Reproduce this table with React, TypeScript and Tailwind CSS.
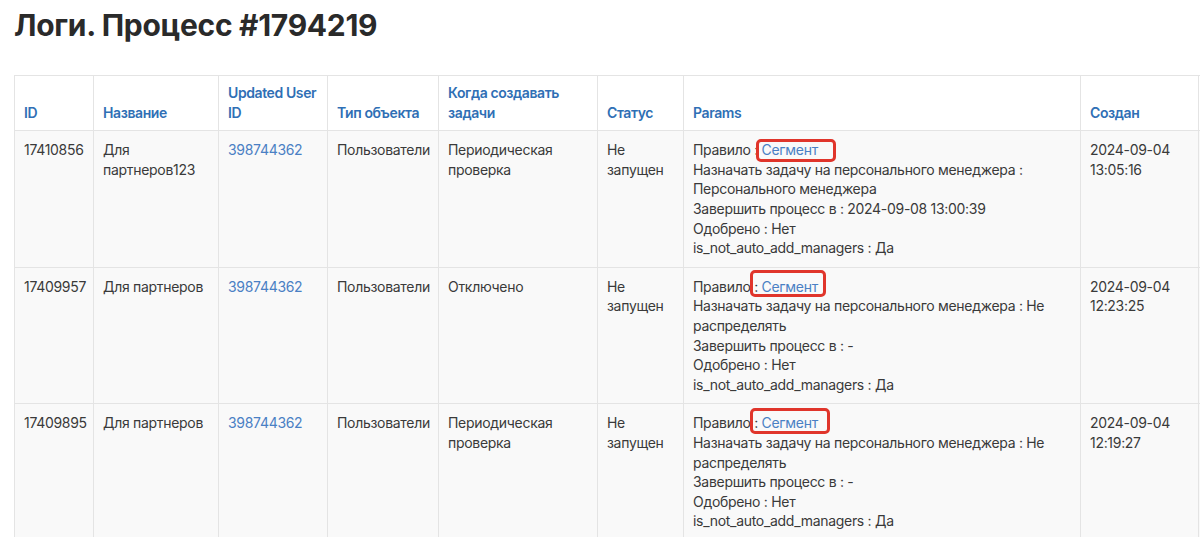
import React from "react";

type Row = {
    id: string;
    name: string;
    userId: string;
    type: string;
    when: string;
    status: string;
    manager: string;
    finish: string;
    created: string[];
    box: string;
};

const rows: Row[] = [
    {
        id: "17410856",
        name: "Для партнеров123",
        userId: "398744362",
        type: "Пользователи",
        when: "Периодическая проверка",
        status: "Не запущен",
        manager: "Персонального менеджера",
        finish: "2024-09-08 13:00:39",
        created: ["2024-09-04", "13:05:16"],
        box: "-left-[6px] -right-[18px] -top-[1px] -bottom-[2px]",
    },
    {
        id: "17409957",
        name: "Для партнеров",
        userId: "398744362",
        type: "Пользователи",
        when: "Отключено",
        status: "Не запущен",
        manager: "Не распределять",
        finish: "-",
        created: ["2024-09-04", "12:23:25"],
        box: "-left-[12px] -right-[8px] -top-[7px] -bottom-[1px]",
    },
    {
        id: "17409895",
        name: "Для партнеров",
        userId: "398744362",
        type: "Пользователи",
        when: "Периодическая проверка",
        status: "Не запущен",
        manager: "Не распределять",
        finish: "-",
        created: ["2024-09-04", "12:19:27"],
        box: "-left-[12px] -right-[12px] -top-[5px] -bottom-[1px]",
    },
];

const headers = ["ID", "Название", "Updated User ID", "Тип объекта", "Когда создавать задачи", "Статус", "Params", "Создан", ""];
const widths = ["w-[79px]", "w-[125px]", "w-[109px]", "w-[111px]", "w-[159px]", "w-[86px]", "w-[397px]", "w-[118px]", "w-[120px]"];

const cell = "border border-[#e4e4e4] px-[9px] pt-[9px] pb-[9px] align-top";

export default function App() {
    return (
        <div className="w-[1200px] h-[537px] overflow-hidden bg-white font-['Inter',sans-serif] text-[14px] leading-[19.6px] text-[#3a3a3a] tracking-[-0.3px]">
            <h1 className="pl-[14px] pt-[5px] text-[30px] leading-[40px] font-bold text-[#2a2a2a] tracking-[-0.3px]">
                Логи. Процесс #1794219
            </h1>
            <div className="pl-[14px] pt-[30px]">
                <table className="table-fixed border-collapse w-[1304px]">
                    <colgroup>
                        {widths.map((w, i) => (
                            <col key={i} className={w} />
                        ))}
                    </colgroup>
                    <thead>
                        <tr className="bg-white">
                            {headers.map((h, i) => (
                                <th
                                    key={i}
                                    className="border border-[#e4e4e4] pl-[9px] pr-[6px] pt-[7px] pb-[8px] align-bottom text-left font-semibold text-[#2f6fb5] tracking-[-0.4px]"
                                >
                                    {h}
                                </th>
                            ))}
                        </tr>
                    </thead>
                    <tbody>
                        {rows.map((r) => (
                            <tr key={r.id} className="bg-[#f9f9f9] h-[135px]">
                                <td className={cell}>{r.id}</td>
                                <td className={cell}>{r.name}</td>
                                <td className={`${cell} text-[#4a80c4]`}>{r.userId}</td>
                                <td className={cell}>{r.type}</td>
                                <td className={cell}>{r.when}</td>
                                <td className={cell}>{r.status}</td>
                                <td className={cell}>
                                    <div>
                                        Правило :{" "}
                                        <span className="relative inline-block leading-[19.6px] text-[#4a80c4]">
                                            Сегмент
                                            <span
                                                className={`absolute ${r.box} rounded-[5px] border-[3px] border-[#e0352b]`}
                                            />
                                        </span>
                                    </div>
                                    <div>Назначать задачу на персонального менеджера : {r.manager}</div>
                                    <div>Завершить процесс в : {r.finish}</div>
                                    <div>Одобрено : Нет</div>
                                    <div>is_not_auto_add_managers : Да</div>
                                </td>
                                <td className={cell}>
                                    {r.created.map((c) => (
                                        <div key={c}>{c}</div>
                                    ))}
                                </td>
                                <td className={cell}></td>
                            </tr>
                        ))}
                    </tbody>
                </table>
            </div>
        </div>
    );
}
